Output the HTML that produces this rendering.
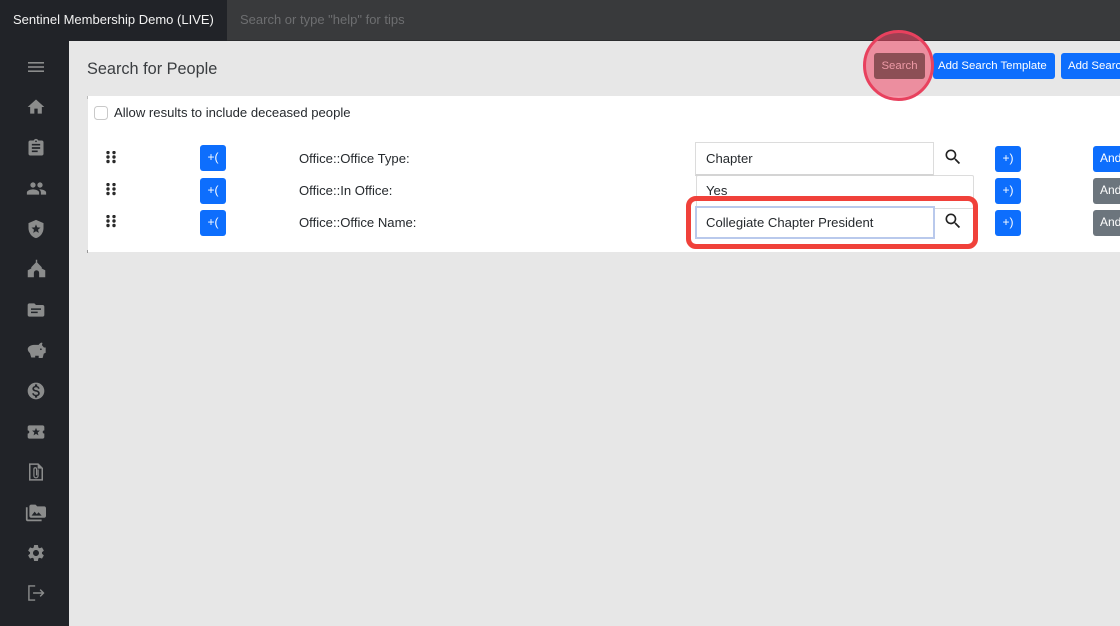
<!DOCTYPE html>
<html><head><meta charset="utf-8"><style>
*{box-sizing:border-box}
html,body{margin:0;padding:0;width:1120px;height:626px;overflow:hidden;background:#e7e7e7;font-family:"Liberation Sans",sans-serif;color:#262a2e}
#w{position:absolute;left:0;top:0;width:1120px;height:626px;overflow:hidden}
.a{position:absolute;white-space:nowrap}
.t{font-size:13.1px;line-height:17px}
.btn{position:absolute;background:#0d6efd;color:#fff;border-radius:3px;font-size:11.4px;text-align:center;white-space:nowrap;overflow:hidden}
.sm{width:26px;height:26px;line-height:25px;font-size:12px}
.and{left:1093px;width:27px;height:26px;line-height:25px;text-align:left;padding-left:7px;font-size:12px;border-radius:3px 0 0 3px}
.gr{background:#6c757d}
svg{position:absolute;display:block}
.ic path,.ic circle{fill:#8b8c8c}
.ic .d{fill:#22252a}
</style></head><body><div id="w">
<div class="a" style="left:0;top:0;width:227px;height:41px;background:#212328"></div>
<div class="a" style="left:227px;top:0;width:893px;height:41px;background:#393a3c;border-bottom:1px solid #2c2d2f"></div>
<div class="a" style="left:13px;top:12px;font-size:13px;line-height:16px;color:#f2f2f2">Sentinel Membership Demo (LIVE)</div>
<div class="a" style="left:240px;top:12px;font-size:13px;line-height:16px;color:#6d6e70">Search or type "help" for tips</div>
<div class="a" style="left:0;top:40px;width:69px;height:586px;background:#212328"></div>

<div class="a" style="left:87px;top:59px;font-size:16.3px;line-height:20px;color:#3a3d40">Search for People</div>
<div class="a" style="left:88px;top:96px;width:1032px;height:156px;background:#fff"></div>
<div class="a" style="left:87px;top:96px;width:1px;height:3px;background:#bbb"></div>
<div class="a" style="left:87px;top:250px;width:1px;height:3px;background:#999"></div>

<div class="a" style="left:94px;top:106px;width:14px;height:14px;border:1px solid #c9c9c9;border-radius:3.5px;background:#fff"></div>
<div class="a t" style="left:114px;top:104px">Allow results to include deceased people</div>

<svg width="10" height="14" style="left:106px;top:151px"><g fill="#2a2a2a"><circle cx="2" cy="1.5" r="1.7"/><circle cx="8" cy="1.5" r="1.7"/><circle cx="2" cy="6" r="1.7"/><circle cx="8" cy="6" r="1.7"/><circle cx="2" cy="10.500" r="1.7"/><circle cx="8" cy="10.500" r="1.7"/></g></svg>
<svg width="10" height="14" style="left:106px;top:183px"><g fill="#2a2a2a"><circle cx="2" cy="1.5" r="1.7"/><circle cx="8" cy="1.5" r="1.7"/><circle cx="2" cy="6" r="1.7"/><circle cx="8" cy="6" r="1.7"/><circle cx="2" cy="10.500" r="1.7"/><circle cx="8" cy="10.500" r="1.7"/></g></svg>
<svg width="10" height="14" style="left:106px;top:215px"><g fill="#2a2a2a"><circle cx="2" cy="1.5" r="1.7"/><circle cx="8" cy="1.5" r="1.7"/><circle cx="2" cy="6" r="1.7"/><circle cx="8" cy="6" r="1.7"/><circle cx="2" cy="10.500" r="1.7"/><circle cx="8" cy="10.500" r="1.7"/></g></svg>

<div class="btn sm" style="left:200px;top:145px">+(</div>
<div class="btn sm" style="left:200px;top:178px">+(</div>
<div class="btn sm" style="left:200px;top:210px">+(</div>

<div class="a t" style="left:299px;top:150px">Office::Office Type:</div>
<div class="a t" style="left:299px;top:182px">Office::In Office:</div>
<div class="a t" style="left:299px;top:214px">Office::Office Name:</div>

<div class="a" style="left:696px;top:175px;width:278px;height:34px;background:#fff;border:1px solid #dcdcdc;border-radius:2px"></div>
<div class="a t" style="left:706px;top:182px">Yes</div>
<div class="a" style="left:695px;top:142px;width:239px;height:34px;background:#fff;border:1px solid #dcdcdc;border-bottom:2px solid #d4d4d4"></div>
<div class="a t" style="left:706px;top:150px">Chapter</div>
<svg width="20" height="20" viewBox="0 0 24 24" style="left:943px;top:147px"><path fill="#222" d="M15.500 14h-.79l-.28-.27C15.410 12.590 16 11.110 16 9.500 16 5.910 13.090 3 9.500 3S3 5.910 3 9.500 5.910 16 9.500 16c1.610 0 3.090-.59 4.230-1.570l.27.28v.79l5 4.990L20.490 19l-4.990-5zm-6 0C7.010 14 5 11.990 5 9.500S7.010 5 9.500 5 14 7.010 14 9.500 11.990 14 9.500 14z"/></svg>

<div class="a" style="left:695px;top:206px;width:240px;height:33px;background:#fff;border:2px solid #b9c9ec"></div>
<div class="a t" style="left:706px;top:214px">Collegiate Chapter President</div>
<svg width="20" height="20" viewBox="0 0 24 24" style="left:943px;top:211px"><path fill="#222" d="M15.500 14h-.79l-.28-.27C15.410 12.590 16 11.110 16 9.500 16 5.910 13.090 3 9.500 3S3 5.910 3 9.500 5.910 16 9.500 16c1.610 0 3.090-.59 4.230-1.570l.27.28v.79l5 4.990L20.490 19l-4.990-5zm-6 0C7.010 14 5 11.990 5 9.500S7.010 5 9.500 5 14 7.010 14 9.500 11.990 14 9.500 14z"/></svg>
<div class="a" style="left:686px;top:196px;width:292px;height:53px;border:5px solid #f0413a;border-radius:10px"></div>

<div class="btn sm" style="left:995px;top:146px">+)</div>
<div class="btn sm" style="left:995px;top:178px">+)</div>
<div class="btn sm" style="left:995px;top:210px">+)</div>
<div class="btn and" style="top:146px">And</div>
<div class="btn and gr" style="top:178px">And</div>
<div class="btn and gr" style="top:210px">And</div>

<div class="btn" style="left:933px;top:53px;width:122px;height:26px;line-height:26px;text-align:left;padding-left:5px">Add Search Template</div>
<div class="btn" style="left:1061px;top:53px;width:59px;height:26px;line-height:26px;text-align:left;padding-left:7px;border-radius:3px 0 0 3px">Add Search Template</div>
<div class="a" style="left:863px;top:30px;width:71px;height:71px;border-radius:50%;background:rgba(240,70,100,.55);border:3.5px solid #e8415e"></div>
<div class="btn" style="left:874px;top:53px;width:51px;height:26px;line-height:26px;background:#8c4f55;color:#ee9aa6">Search</div>

<svg class="ic" width="16" height="12" style="left:28px;top:61px"><g fill="#8b8c8c"><rect width="16" height="1.6" y="1"/><rect width="16" height="1.6" y="5.2"/><rect width="16" height="1.6" y="9.4"/></g></svg>
<svg class="ic" width="20" height="20" viewBox="0 0 24 24" style="left:26px;top:97px"><path d="M10 20v-6h4v6h5v-8h3L12 3 2 12h3v8z"/></svg>
<svg class="ic" width="20" height="20" viewBox="0 0 24 24" style="left:26px;top:138px"><path d="M19 3h-4.180C14.400 1.840 13.300 1 12 1c-1.300 0-2.400.84-2.820 2H5c-1.100 0-2 .9-2 2v14c0 1.100.9 2 2 2h14c1.100 0 2-.9 2-2V5c0-1.100-.9-2-2-2zm-7 0c.55 0 1 .45 1 1s-.45 1-1 1-1-.45-1-1 .45-1 1-1zm2 14H7v-2h7v2zm3-4H7v-2h10v2zm0-4H7V7h10v2z"/></svg>
<svg class="ic" width="21" height="21" viewBox="0 0 24 24" style="left:25.5px;top:178px"><path d="M16 11c1.660 0 2.990-1.340 2.990-3S17.660 5 16 5c-1.660 0-3 1.340-3 3s1.340 3 3 3zm-8 0c1.660 0 2.990-1.340 2.990-3S9.660 5 8 5C6.340 5 5 6.340 5 8s1.340 3 3 3zm0 2c-2.330 0-7 1.170-7 3.500V19h14v-2.500c0-2.330-4.670-3.500-7-3.500zm8 0c-.29 0-.62.02-.97.05 1.160.84 1.970 1.970 1.970 3.450V19h6v-2.500c0-2.330-4.670-3.500-7-3.500z"/></svg>
<svg class="ic" width="20" height="20" viewBox="0 0 24 24" style="left:26px;top:219px"><path d="M12 1L3 5v6c0 5.550 3.840 10.740 9 12 5.160-1.260 9-6.450 9-12V5l-9-4z"/><path class="d" d="M12 6.500l1.500 3.600 3.900.3-3 2.500.95 3.800L12 14.700l-3.350 2 .95-3.800-3-2.500 3.900-.3z"/></svg>
<svg class="ic" width="21" height="21" viewBox="0 0 24 24" style="left:25.5px;top:258px"><path d="M11.200 2h1.600v3.200L18 10.500V12l4 2v8h-7v-5a3 3 0 0 0-6 0v5H2v-8l4-2v-1.500l5.200-5.300z"/></svg>
<svg class="ic" width="20" height="20" viewBox="0 0 24 24" style="left:26px;top:300px"><path d="M20 6h-8l-2-2H4c-1.100 0-1.990.9-1.990 2L2 18c0 1.100.9 2 2 2h16c1.100 0 2-.9 2-2V8c0-1.100-.9-2-2-2z"/><path class="d" d="M6 10h12v1.800H6zM6 14h8v1.800H6z"/></svg>
<svg class="ic" width="21" height="21" viewBox="0 0 24 24" style="left:25.5px;top:340px"><path d="M18 3c.5 0 .9.5.7 1l-.5 1.800 2.300 2.700H22.500v6l-2.200 1-1.300 5h-4.500v-2.500h-4V20H6l-1.500-5C3 13.500 2 12 2 10.500 2 7.500 5.500 5.500 9 5.500h5.500C15.500 4 17 3 18 3z"/><circle class="d" cx="17" cy="10.500" r="1"/></svg>
<svg class="ic" width="20" height="20" viewBox="0 0 24 24" style="left:26px;top:381px"><path d="M12 2C6.480 2 2 6.480 2 12s4.480 10 10 10 10-4.480 10-10S17.520 2 12 2zm1.410 16.090V20h-2.670v-1.930c-1.710-.36-3.160-1.460-3.270-3.400h1.960c.1 1.050.82 1.870 2.650 1.870 1.960 0 2.400-.98 2.400-1.590 0-.83-.44-1.610-2.670-2.140-2.480-.6-4.180-1.620-4.180-3.670 0-1.720 1.390-2.840 3.110-3.210V4h2.670v1.950c1.860.45 2.790 1.860 2.850 3.390H14.300c-.05-1.110-.64-1.870-2.220-1.870-1.500 0-2.400.68-2.400 1.640 0 .84.65 1.390 2.670 1.910s4.180 1.390 4.180 3.910c-.01 1.830-1.380 2.830-3.120 3.160z"/></svg>
<svg class="ic" width="20" height="20" viewBox="0 0 24 24" style="left:26px;top:422px"><path d="M20 12c0-1.100.9-2 2-2V6c0-1.100-.9-2-2-2H4c-1.100 0-1.990.9-1.990 2v4c1.100 0 1.990.9 1.990 2s-.89 2-2 2v4c0 1.100.9 2 2 2h16c1.100 0 2-.9 2-2v-4c-1.100 0-2-.9-2-2z"/><path class="d" d="M12 7l1.300 3.200 3.400.2-2.650 2.200.9 3.400L12 14.200 9.050 16l.9-3.400-2.650-2.200 3.400-.2z"/></svg>
<svg width="20" height="20" viewBox="0 0 24 24" style="left:26px;top:462px"><path fill="none" stroke="#8b8c8c" stroke-width="1.800" d="M4.500 2.500h10l5 5v14h-15z"/><path fill="#8b8c8c" d="M14 2l6 6h-6z"/><path fill="none" stroke="#8b8c8c" stroke-width="1.400" d="M14.500 9v7.500a2.500 2.500 0 0 1-5 0V8.500a1.600 1.600 0 0 1 3.200 0V16"/></svg>
<svg class="ic" width="21" height="21" viewBox="0 0 24 24" style="left:25px;top:502px"><path d="M1 6h2v14h16v2H3c-1.100 0-2-.9-2-2z"/><path d="M22 5h-8l-2-2H7c-1.100 0-2 .9-2 2v11c0 1.100.9 2 2 2h15c1.100 0 2-.9 2-2V7c0-1.100-.9-2-2-2z"/><path class="d" d="M7.500 15.500l3.500-4.500 2.500 3 2-2.300 3.500 3.800z"/></svg>
<svg class="ic" width="20" height="20" viewBox="0 0 24 24" style="left:26px;top:543px"><path d="M19.140 12.940c.04-.3.06-.61.06-.94 0-.32-.02-.64-.07-.94l2.030-1.580c.18-.14.23-.41.12-.61l-1.920-3.320c-.12-.22-.37-.29-.59-.22l-2.390.96c-.5-.38-1.030-.7-1.620-.94l-.36-2.540c-.04-.24-.24-.41-.48-.41h-3.840c-.24 0-.43.17-.47.41l-.36 2.540c-.59.24-1.130.57-1.620.94l-2.390-.96c-.22-.08-.47 0-.59.22L2.740 8.870c-.12.21-.08.47.12.61l2.030 1.580c-.05.3-.09.63-.09.94s.02.64.07.94l-2.030 1.580c-.18.14-.23.41-.12.61l1.920 3.320c.12.22.37.29.59.22l2.390-.96c.5.38 1.030.7 1.620.94l.36 2.540c.05.24.24.41.48.41h3.840c.24 0 .44-.17.47-.41l.36-2.540c.59-.24 1.130-.56 1.620-.94l2.390.96c.22.08.47 0 .59-.22l1.920-3.320c.12-.22.07-.47-.12-.61l-2.010-1.580zM12 15.600c-1.980 0-3.600-1.620-3.600-3.600s1.620-3.600 3.600-3.600 3.600 1.620 3.600 3.600-1.620 3.600-3.600 3.600z"/></svg>
<svg width="20" height="20" viewBox="0 0 24 24" style="left:26px;top:583px"><path fill="none" stroke="#8b8c8c" stroke-width="1.700" d="M11 3.500H3.500v17H11M8.500 12H21M17 8l4 4-4 4"/></svg>
</div></body></html>
